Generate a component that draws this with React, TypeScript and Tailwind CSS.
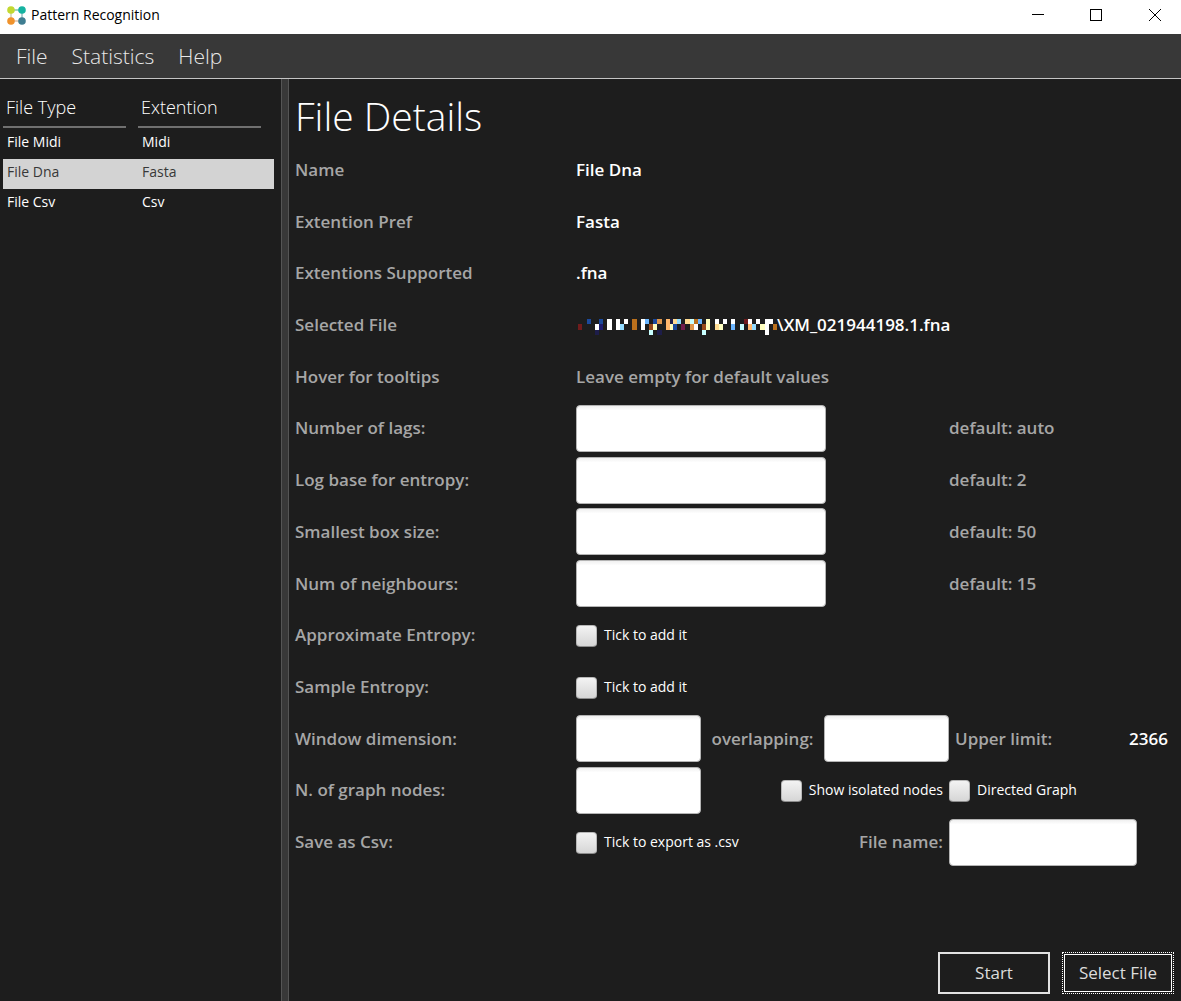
import React from "react";

type Cell = [x: number, y: number, w: number, h: number, fill: string];

const W = "#ffffff";
const BLUE = "#1c4a9c";
const NAVY = "#1d1d70";
const SKY = "#6cb6ff";
const ICE = "#92dbff";
const MINT = "#c8ffff";
const CREAM = "#ffffc0";
const PEACH = "#ffdb92";
const TAN = "#de964c";
const RUST = "#bb701c";
const BROWN = "#984a1c";
const DUSK = "#1d1d4a";

const cells: Cell[] = [
  [0, 5, 4, 6, "#701c1c"], [9, 0, 4, 5, BLUE], [21, 0, 4, 5, BLUE], [17, 5, 4, 6, W], [21, 5, 4, 6, NAVY], [17, 11, 4, 5, DUSK],
  [29, 0, 5, 11, W], [38, 0, 4, 11, W], [42, 5, 4, 6, ICE], [46, 0, 4, 5, W], [54, 0, 5, 11, RUST],
  [63, 0, 4, 11, W], [67, 0, 4, 5, SKY], [71, 5, 4, 6, BROWN], [75, 5, 4, 6, CREAM], [75, 0, 4, 5, BLUE], [79, 0, 5, 5, TAN],
  [71, 11, 4, 5, MINT], [79, 11, 5, 5, DUSK], [88, 0, 4, 11, "#ffb66c"], [92, 0, 3, 5, DUSK], [92, 5, 3, 6, CREAM],
  [95, 0, 4, 5, PEACH], [95, 5, 4, 6, BLUE], [99, 0, 4, 5, ICE], [103, 5, 4, 6, "#701c4a"], [107, 0, 5, 5, PEACH],
  [112, 0, 4, 5, MINT], [116, 0, 4, 5, RUST], [120, 0, 4, 5, SKY], [112, 5, 4, 6, TAN], [116, 5, 4, 6, W],
  [124, 5, 4, 6, BROWN], [128, 0, 4, 11, CREAM], [124, 11, 4, 5, MINT], [137, 0, 4, 5, W], [137, 5, 4, 6, PEACH],
  [141, 5, 4, 6, CREAM], [145, 0, 4, 5, W], [153, 0, 4, 5, W], [153, 5, 4, 6, SKY], [162, 5, 4, 6, MINT],
  [166, 0, 4, 5, "#701c1c"], [170, 0, 4, 5, W], [170, 5, 4, 6, "#ffb66c"], [174, 5, 4, 6, ICE], [178, 0, 4, 5, W],
  [182, 5, 5, 6, CREAM], [187, 0, 8, 5, W], [187, 5, 4, 11, W], [195, 5, 4, 6, RUST],
];

const inputClass =
  "h-[47px] rounded-[4px] border border-[#b4b4b4] bg-white bg-linear-to-b from-[#f0f0f0] via-white via-10% to-white px-3 text-[17px] text-[#1d1d1d] outline-none";

function Field({ label, className }: { label: string; className: string }) {
  return <input type="text" aria-label={label} className={`${inputClass} ${className}`} />;
}

function Check({ children }: { children: string }) {
  return (
    <label className="flex items-center gap-[7px] text-[14px] font-normal whitespace-nowrap text-white">
      <input
        type="checkbox"
        className="mt-[2px] h-[22px] w-[21px] appearance-none rounded-[4px] border border-[#b8b8b8] border-b-[#8c8c8c] bg-linear-to-b from-[#f3f3f3] to-[#d6d6d6] checked:from-[#8ab4e8] checked:to-[#5a8ccc]"
      />
      {children}
    </label>
  );
}

function Row({ label, middle, end }: { label: string; middle?: React.ReactNode; end?: React.ReactNode }) {
  return (
    <div className="grid grid-cols-[minmax(0,281fr)_minmax(0,373fr)_minmax(0,225fr)] items-center">
      <div>{label}</div>
      <div className="flex items-center">{middle}</div>
      <div className="flex items-center">{end}</div>
    </div>
  );
}

const fileTypes = [
  ["File Midi", "Midi"],
  ["File Dna", "Fasta"],
  ["File Csv", "Csv"],
];

const parameters = [
  ["Number of lags:", "default: auto"],
  ["Log base for entropy:", "default: 2"],
  ["Smallest box size:", "default: 50"],
  ["Num of neighbours:", "default: 15"],
];

export default function App() {
  return (
    <div className="flex min-h-screen flex-col bg-[#1d1d1d] font-['Open_Sans','Noto_Sans',sans-serif] text-white">
      <header className="flex h-[34px] items-center bg-white text-black">
        <svg className="mb-[4px] ml-[7px] size-[19px]" viewBox="0 0 19 19" aria-hidden="true">
          <path d="M4 4h11" stroke="#6fbf9a" strokeWidth="1.3" />
          <path d="M4 4v11" stroke="#c9c7a0" strokeWidth="1.3" />
          <path d="M4 15h11" stroke="#d9b596" strokeWidth="1.3" />
          <path d="M15 4v11" stroke="#86b5b8" strokeWidth="1.3" />
          <circle cx="4" cy="4" r="3.8" fill="#c3d831" />
          <circle cx="15" cy="4" r="3.8" fill="#16b3a1" />
          <circle cx="4" cy="15" r="3.8" fill="#f0922b" />
          <circle cx="15" cy="15" r="3.8" fill="#3f7d91" />
        </svg>
        <span className="mb-[4px] ml-[5px] flex-1 text-[14px] leading-5">Pattern Recognition</span>
        <button aria-label="Minimize" className="flex h-full w-[58px] items-center justify-center">
          <svg width="12" height="12" viewBox="0 0 12 12" shapeRendering="crispEdges"><path d="M0 3.5h12" stroke="#000" /></svg>
        </button>
        <button aria-label="Maximize" className="flex h-full w-[58px] items-center justify-center">
          <svg className="mb-[4px]" width="12" height="12" viewBox="0 0 12 12" shapeRendering="crispEdges"><path d="M.5.5h11v11H.5z" fill="none" stroke="#000" /></svg>
        </button>
        <button aria-label="Close" className="mr-[-4px] flex h-full w-[60px] items-center justify-center">
          <svg className="mb-[4px]" width="12" height="12" viewBox="0 0 12 12"><path d="M0 0l12 12M12 0L0 12" stroke="#000" /></svg>
        </button>
      </header>
      <nav className="flex h-[45px] items-center gap-6 border-b border-[#c4c4c4] bg-[#383838] pb-px pl-4 text-[21px] leading-8 font-light text-[#e8e8e8]">
        <button>File</button>
        <button>Statistics</button>
        <button>Help</button>
      </nav>
      <div className="flex flex-1">
        <aside className="w-[281px] shrink-0 pl-[3px]">
          <table className="mt-4 w-[271px] table-fixed border-collapse text-left text-[14px] leading-5">
            <thead>
              <tr className="text-[18px] leading-6">
                <th className="w-[135px] p-0 font-light">
                  <div className="mr-3 mb-px h-[33px] border-b-2 border-[#707070] pl-[3px]">File Type</div>
                </th>
                <th className="p-0 font-light">
                  <div className="mr-[13px] mb-px h-[33px] border-b-2 border-[#707070] pl-[3px]">Extention</div>
                </th>
              </tr>
            </thead>
            <tbody>
              {fileTypes.map(([name, ext]) => (
                <tr key={name} className={name === "File Dna" ? "h-[30px] bg-[#d3d3d3] text-[#383838]" : "h-[30px]"}>
                  <td className="p-0 pb-1 pl-1">{name}</td>
                  <td className="p-0 pb-1 pl-1">{ext}</td>
                </tr>
              ))}
            </tbody>
          </table>
        </aside>
        <div className="w-2 shrink-0 border-x border-[#555555] bg-[#383838]" />
        <main className="flex flex-1 flex-col pr-[7px] pl-[6px]">
          <h1 className="pt-2 text-[39px] leading-[57px] font-light">File Details</h1>
          <form className="grid flex-1 auto-rows-fr text-[17px] leading-6 font-semibold text-[#a6a6a6]" onSubmit={(e) => e.preventDefault()}>
            <Row label="Name" middle={<span className="text-white">File Dna</span>} />
            <Row label="Extention Pref" middle={<span className="text-white">Fasta</span>} />
            <Row label="Extentions Supported" middle={<span className="text-white">.fna</span>} />
            <Row
              label="Selected File"
              middle={
                <>
                  <svg className="mt-[5px] ml-[2px] shrink-0" width="199" height="16" viewBox="0 0 199 16" shapeRendering="crispEdges" aria-hidden="true">
                    {cells.map(([x, y, w, h, fill], i) => (
                      <rect key={i} x={x} y={y} width={w} height={h} fill={fill} />
                    ))}
                  </svg>
                  <span className="whitespace-nowrap text-white">\XM_021944198.1.fna</span>
                </>
              }
            />
            <Row label="Hover for tooltips" middle="Leave empty for default values" />
            {parameters.map(([label, hint]) => (
              <Row key={label} label={label} middle={<Field label={label} className="w-[250px]" />} end={hint} />
            ))}
            <Row label="Approximate Entropy:" middle={<Check>Tick to add it</Check>} />
            <Row label="Sample Entropy:" middle={<Check>Tick to add it</Check>} />
            <Row
              label="Window dimension:"
              middle={
                <div className="flex flex-1 items-center justify-between">
                  <Field label="Window dimension" className="w-[125px]" />
                  <span>overlapping:</span>
                  <Field label="Overlapping" className="w-[125px]" />
                </div>
              }
              end={
                <div className="flex flex-1 justify-between pr-[6px] pl-[6px]">
                  <span>Upper limit:</span>
                  <span className="text-white">2366</span>
                </div>
              }
            />
            <Row
              label="N. of graph nodes:"
              middle={
                <div className="flex flex-1 items-center justify-between pr-[6px]">
                  <Field label="Number of graph nodes" className="w-[125px]" />
                  <Check>Show isolated nodes</Check>
                </div>
              }
              end={<Check>Directed Graph</Check>}
            />
            <Row
              label="Save as Csv:"
              middle={
                <div className="flex flex-1 items-center justify-between pr-[6px]">
                  <Check>Tick to export as .csv</Check>
                  <span>File name:</span>
                </div>
              }
              end={<Field label="File name" className="w-[188px]" />}
            />
          </form>
          <footer className="flex justify-end gap-3 pt-[84px] pb-[7px] text-[17px] leading-6 text-[#dcdcdc]">
            <button className="h-[42px] w-[112px] border-2 border-[#e2e2e2]">Start</button>
            <button className="h-[42px] w-[112px] border border-dotted border-white p-px">
              <span className="flex h-full items-center justify-center border border-white">Select File</span>
            </button>
          </footer>
        </main>
      </div>
    </div>
  );
}
